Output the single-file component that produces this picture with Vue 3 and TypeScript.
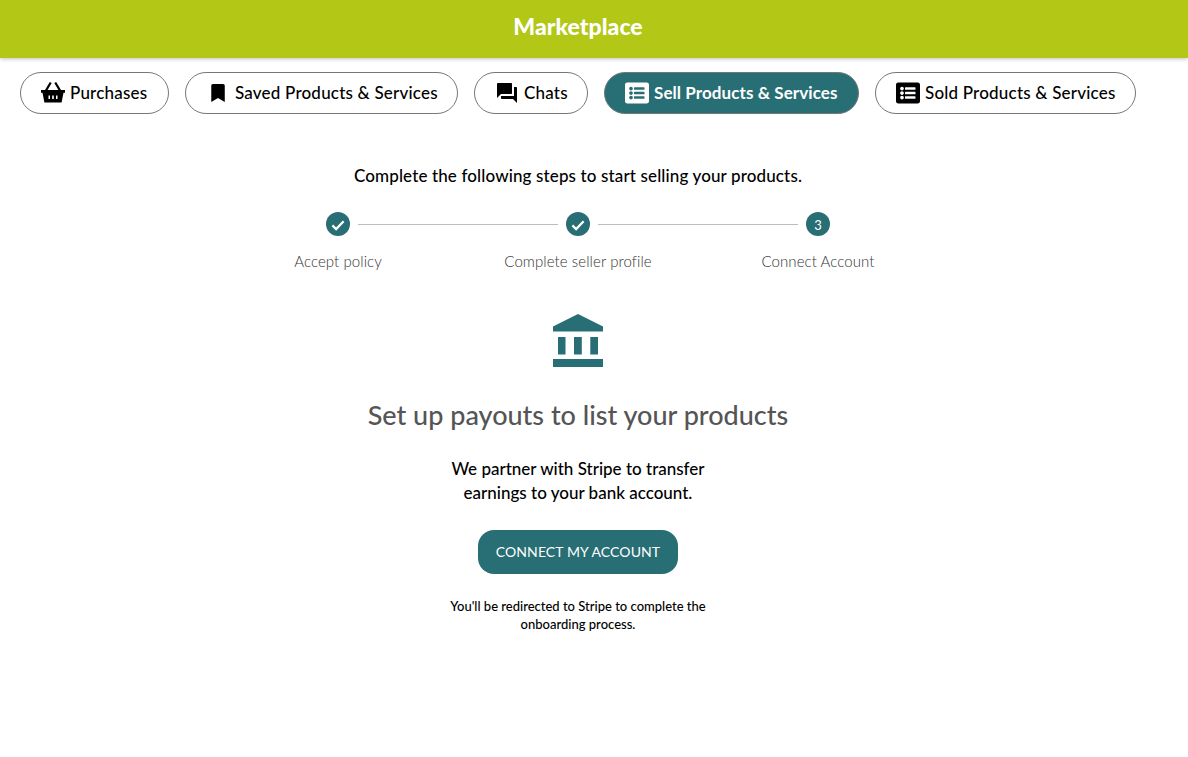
<script setup lang="ts">
interface Tab { label: string; view: string; path: string; active?: boolean }
const listPath = 'M464 480H48c-26.51 0-48-21.49-48-48V80c0-26.51 21.49-48 48-48h416c26.51 0 48 21.49 48 48v352c0 26.51-21.49 48-48 48zM128 120c-22.091 0-40 17.909-40 40s17.909 40 40 40 40-17.909 40-40-17.909-40-40-40zm0 96c-22.091 0-40 17.909-40 40s17.909 40 40 40 40-17.909 40-40-17.909-40-40-40zm0 96c-22.091 0-40 17.909-40 40s17.909 40 40 40 40-17.909 40-40-17.909-40-40-40zm288-136v-32c0-6.627-5.373-12-12-12H204c-6.627 0-12 5.373-12 12v32c0 6.627 5.373 12 12 12h200c6.627 0 12-5.373 12-12zm0 96v-32c0-6.627-5.373-12-12-12H204c-6.627 0-12 5.373-12 12v32c0 6.627 5.373 12 12 12h200c6.627 0 12-5.373 12-12zm0 96v-32c0-6.627-5.373-12-12-12H204c-6.627 0-12 5.373-12 12v32c0 6.627 5.373 12 12 12h200c6.627 0 12-5.373 12-12z'
const tabs: Tab[] = [
  { label: 'Purchases', view: '0 0 24 24', path: 'M0 9h24v2.800h-1.500L20.600 21.500H3.400L1.500 11.800H0zM7.500 14.500v3.500h1.500v-3.500zM11.200 14.500v3.500h1.600v-3.500zM15 14.500v3.500h1.500v-3.500zM4 9L8.800 1l1.900 1.100L6.600 9zM20 9L15.200 1l-1.900 1.100L17.400 9z' },
  { label: 'Saved Products & Services', view: '-150 -85 683 683', path: 'M0 512V48C0 21.49 21.49 0 48 0h288c26.51 0 48 21.49 48 48v464L192 400 0 512z' },
  { label: 'Chats', view: '0 0 24 24', path: 'M21 6h-2v9H6v2c0 .55.45 1 1 1h11l4 4V7c0-.55-.45-1-1-1zm-4 6V3c0-.55-.45-1-1-1H3c-.55 0-1 .45-1 1v14l4-4h10c.55 0 1-.45 1-1z' },
  { label: 'Sell Products & Services', view: '0 0 512 512', path: listPath, active: true },
  { label: 'Sold Products & Services', view: '0 0 512 512', path: listPath }
]
const steps = ['Accept policy', 'Complete seller profile', 'Connect Account']
</script>

<template>
  <div class="page">
    <header class="bar"><h1>Marketplace</h1></header>
    <nav class="tabs">
      <button v-for="t in tabs" :key="t.label" class="tab" :class="{ active: t.active }">
        <svg :viewBox="t.view" width="24" height="24" fill="currentColor" fill-rule="evenodd"><path :d="t.path" /></svg>
        <span class="tab-text">{{ t.label }}</span>
      </button>
    </nav>
    <main class="main">
      <p class="intro">Complete the following steps to start selling your products.</p>
      <div class="track">
        <template v-for="(s, i) in steps" :key="s">
          <span class="dot">
            <svg v-if="i < 2" viewBox="0 0 24 24" width="18" height="18" fill="none" stroke="#fff" stroke-width="3"><path d="M4.500 12.500l5 5 10-10.500" /></svg>
            <template v-else>3</template>
          </span>
          <span v-if="i < 2" class="line"></span>
        </template>
      </div>
      <div class="labels">
        <span v-for="s in steps" :key="s">{{ s }}</span>
      </div>
      <svg class="bank" viewBox="0 0 50 53" width="50" height="53" fill="#286e75">
        <path d="M25 0L50 12.500V17.500H0V12.500z" />
        <path d="M5 23h7.500v17.500H5zM21 23h7.800v17.500H21zM37.300 23H45v17.500h-7.700zM0 45h50v8H0z" />
      </svg>
      <h2>Set up payouts to list your products</h2>
      <p class="partner">We partner with Stripe to transfer<br />earnings to your bank account.</p>
      <button class="connect">CONNECT MY ACCOUNT</button>
      <p class="note">You'll be redirected to Stripe to complete the<br />onboarding process.</p>
    </main>
  </div>
</template>

<style>
body { margin: 0; background: #fff; }
</style>

<style scoped>
.page { font-family: Lato, "Open Sans", sans-serif; color: #000; min-height: 757px; }
.bar { height: 58px; box-sizing: border-box; background: #b2c716; box-shadow: 0 1px 4px rgba(0,0,0,.25); display: flex; align-items: center; justify-content: center; padding: 0 32px 6px 0; }
.bar h1 { margin: 0; color: #fff; font-size: 23px; font-weight: 900; letter-spacing: .05px; }
.tabs { display: grid; grid-template-columns: 149px 273px 114px 255px 261px; gap: 16px; padding: 14px 0 0 20px; }
.tab { height: 42px; display: flex; align-items: center; gap: 5px; box-sizing: border-box; padding: 0 0 0 20px; border: 1px solid #777; border-radius: 21px; background: #fff; color: #000; font: 500 17px Lato, sans-serif; letter-spacing: .2px; white-space: nowrap; }
.tab-text { padding-bottom: 2px; }
.tab.active { background: #286e75; color: #fff; font-weight: 700; letter-spacing: .08px; }
.main { width: 1156px; display: flex; flex-direction: column; align-items: center; }
.intro { margin: 52px 0 0; line-height: 20px; font-size: 17px; font-weight: 500; letter-spacing: .13px; }
.track { margin-top: 26px; display: flex; align-items: center; gap: 8px; }
.dot { width: 24px; height: 24px; border-radius: 50%; background: #286e75; color: #fff; font-size: 13px; padding-top: 1px; box-sizing: border-box; display: flex; align-items: center; justify-content: center; }
.line { width: 200px; height: 1px; background: #bdbdbd; }
.labels { display: grid; grid-template-columns: repeat(3, 240px); margin-top: 16px; text-align: center; font-size: 15px; line-height: 18px; font-weight: 300; color: #333; letter-spacing: .08px; }
.bank { margin-top: 44px; }
h2 { margin: 32px 0 0; font-size: 27px; font-weight: 500; line-height: 32px; color: #555; }
.partner { margin: 26px 0 0; text-align: center; font-size: 17px; line-height: 24px; font-weight: 500; }
.connect { margin-top: 25px; width: 200px; height: 44px; border: 0; border-radius: 16px; background: #286e75; color: #fff; font: 400 14px Lato, sans-serif; letter-spacing: .1px; padding-bottom: 2px; }
.note { margin: 23px 0 0; text-align: center; font-size: 13px; line-height: 18px; font-weight: 500; }
</style>
